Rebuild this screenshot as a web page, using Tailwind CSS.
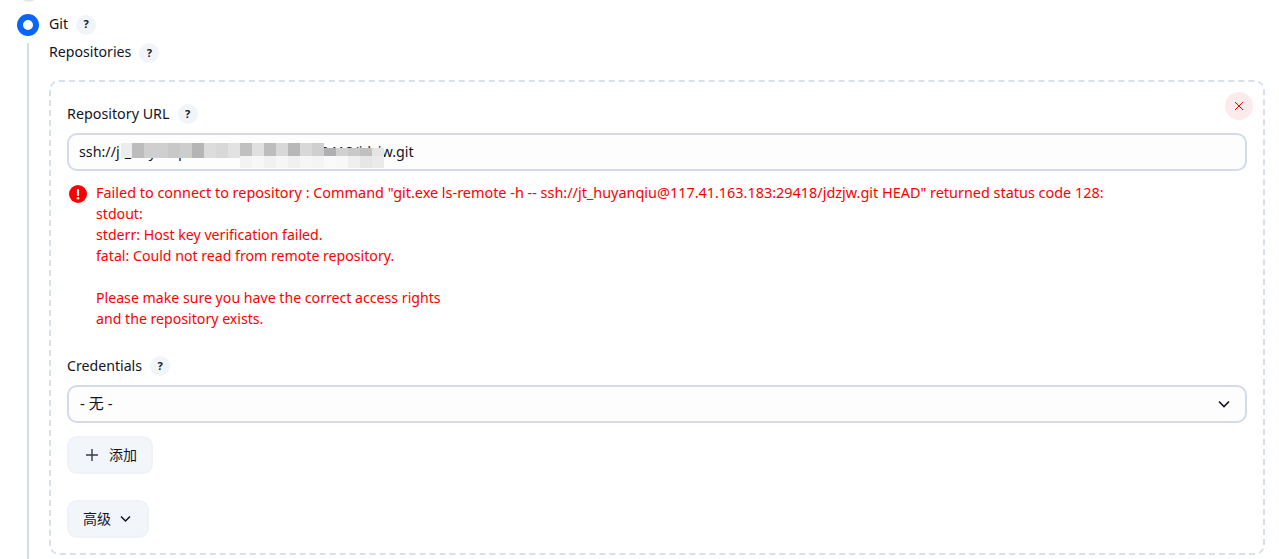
<!DOCTYPE html>
<html lang="zh-CN">
<head>
    <meta charset="UTF-8">
    <title>Git</title>
    <script src="https://cdn.jsdelivr.net/npm/@tailwindcss/browser@4"></script>
</head>
<body class="h-[559px] overflow-hidden bg-white text-[14.15px] text-[#14141f] font-['Noto_Sans','Noto_Sans_CJK_SC',sans-serif]">
    <div class="relative h-[559px] overflow-hidden pl-[17px] pt-[14px]">
        <!-- bottom edge of the previous radio -->
        <span class="absolute left-[18px] -top-[19px] h-[21px] w-[21px] rounded-full bg-[#e4e8ee]"></span>
        <!-- radio row -->
        <div class="flex h-[22px] items-center">
            <span class="h-[22px] w-[22px] rounded-full border-[6px] border-[#0766f7] bg-white"></span>
            <span class="ml-[10px] pb-[3px]">Git</span>
            <span class="ml-[8px] flex h-[20px] w-[20px] items-center justify-center rounded-full bg-[#f1f4f8] pb-px text-[11px] font-bold">?</span>
        </div>
        <div class="mt-[7px] flex h-[516px]">
            <div class="ml-[10px] w-[2px] shrink-0 bg-[#d3dfec]"></div>
            <div class="ml-[20px] w-[1216px]">
                <div class="flex h-[20px] items-center">
                    <span class="pb-[2px]">Repositories</span>
                    <span class="ml-[8px] flex h-[20px] w-[20px] items-center justify-center rounded-full bg-[#f1f4f8] text-[11px] font-bold">?</span>
                </div>
                <!-- repeatable chunk -->
                <div class="relative mt-[17px] h-[475px] rounded-[10px] border-2 border-dashed border-[#d8e0ea] px-[16px] pt-[22px]">
                    <button class="absolute right-[10px] top-[10px] flex h-[28px] w-[28px] items-center justify-center rounded-full bg-[#fdeaea]">
                        <svg class="h-[10px] w-[10px]" viewBox="0 0 10 10" fill="none" stroke="#f00000" stroke-width="1"><path d="M1 1l8 8M9 1l-8 8"/></svg>
                    </button>
                    <div class="flex h-[20px] items-center">
                        <span class="text-[14.3px]">Repository URL</span>
                        <span class="ml-[8px] flex h-[20px] w-[20px] items-center justify-center rounded-full bg-[#f1f4f8] text-[11px] font-bold">?</span>
                    </div>
                    <div class="relative mt-[9px] flex h-[38px] w-[1180px] items-center rounded-[10px] border-2 border-[#d3dbe8] bg-[#fdfdfe] px-[10px]">
                        <span class="text-[14.3px]">ssh://jt_huyanqiu@117.41.163.183:29418/jdzjw.git</span>
                        <!-- mosaic over the address, left part -->
                        <div class="absolute left-[50px] top-[8px] flex h-[15px]">
                            <span class="w-[2px] bg-[#fdfdfe]"></span>
                            <span class="w-[11px] bg-[#ececec]"></span>
                            <span class="w-[12px] bg-[#bcbcbc]"></span>
                            <span class="w-[12px] bg-[#cfcfcf]"></span>
                            <span class="w-[12px] bg-[#cfcfcf]"></span>
                            <span class="w-[12px] bg-[#c8c8c8]"></span>
                            <span class="w-[12px] bg-[#cdcdcd]"></span>
                            <span class="w-[12px] bg-[#b5b5b5]"></span>
                            <span class="w-[12px] bg-[#dcdcdc]"></span>
                            <span class="w-[12px] bg-[#d8d8d8]"></span>
                            <span class="w-[12px] bg-[#e2e2e2]"></span>
                        </div>
                        <!-- mosaic, right part -->
                        <div class="absolute left-[171px] top-[8px] flex flex-col">
                            <div class="flex h-[13px]">
                                <span class="w-[12px] bg-[#c0c0c0]"></span>
                                <span class="w-[12px] bg-[#e0e0e0]"></span>
                                <span class="w-[12px] bg-[#bdbdbd]"></span>
                                <span class="w-[12px] bg-[#d8d8d8]"></span>
                                <span class="w-[12px] bg-[#b8b8b8]"></span>
                                <span class="w-[12px] bg-[#d8d8d8]"></span>
                                <span class="w-[12px] bg-[#cfcfcf]"></span>
                                <span class="mt-[5px] w-[12px] bg-[#b0b0b0]"></span>
                                <span class="mt-[5px] w-[12px] bg-[#d0d0d0]"></span>
                                <span class="mt-[5px] w-[12px] bg-[#c8c8c8]"></span>
                                <span class="mt-[5px] w-[12px] bg-[#c0c0c0]"></span>
                                <span class="mt-[5px] w-[12px] bg-[#e4e4e4]"></span>
                            </div>
                            <div class="flex h-[12px]">
                                <span class="w-[12px] bg-[#f3f3f3]"></span>
                                <span class="w-[12px] bg-[#f7f7f7]"></span>
                                <span class="w-[12px] bg-[#f1f1f1]"></span>
                                <span class="w-[12px] bg-[#f6f6f6]"></span>
                                <span class="w-[12px] bg-[#f0f0f0]"></span>
                                <span class="w-[12px] bg-[#f6f6f6]"></span>
                                <span class="w-[12px] bg-[#f4f4f4]"></span>
                                <span class="w-[12px] bg-[#fafafa]"></span>
                                <span class="w-[12px] bg-[#f8f8f8]"></span>
                                <span class="w-[12px] bg-[#efefef]"></span>
                                <span class="w-[12px] bg-[#e6e6e6]"></span>
                                <span class="w-[12px] bg-[#eaeaea]"></span>
                            </div>
                        </div>
                    </div>
                    <!-- validation error -->
                    <div class="mt-[11px] flex text-[#fe0000]">
                        <svg class="ml-[2px] mt-[3px] h-[18px] w-[18px] shrink-0" viewBox="0 0 18 18"><circle cx="9" cy="9" r="9" fill="#fe0000"/><rect x="7.9" y="4" width="2.2" height="7" rx="1" fill="#fff"/><circle cx="9" cy="13.2" r="1.3" fill="#fff"/></svg>
                        <div class="ml-[9px] leading-[21px]">
                            <div class="text-[14.43px]">Failed to connect to repository : Command "git.exe ls-remote -h -- ssh://jt_huyanqiu@117.41.163.183:29418/jdzjw.git HEAD" returned status code 128:</div>
                            <div>stdout:</div>
                            <div>stderr: Host key verification failed.</div>
                            <div>fatal: Could not read from remote repository.</div>
                            <div class="h-[21px]"></div>
                            <div>Please make sure you have the correct access rights</div>
                            <div>and the repository exists.</div>
                        </div>
                    </div>
                    <div class="mt-[27px] flex h-[20px] items-center">
                        <span>Credentials</span>
                        <span class="ml-[8px] flex h-[20px] w-[20px] items-center justify-center rounded-full bg-[#f1f4f8] text-[11px] font-bold">?</span>
                    </div>
                    <div class="mt-[9px] flex h-[38px] w-[1180px] items-center justify-between rounded-[10px] border-2 border-[#d3dbe8] bg-[#fdfdfe] pl-[11px] pr-[15px]">
                        <span class="pb-[2px] text-[15px]">- 无 -</span>
                        <svg class="h-[10px] w-[12px]" viewBox="0 0 12 10" fill="none" stroke="#14141f" stroke-width="1.6"><path d="M1 2.5l5 5 5-5"/></svg>
                    </div>
                    <button class="mt-[13px] flex h-[38px] items-center rounded-[10px] border-2 border-[#eff2f6] bg-[#f2f5f9] pl-[17px] pr-[14px]">
                        <svg class="h-[12px] w-[12px]" viewBox="0 0 12 12" fill="none" stroke="#3a3a44" stroke-width="1.4"><path d="M6 0v12M0 6h12"/></svg>
                        <span class="ml-[11px] pb-[2px] text-[14px]">添加</span>
                    </button>
                    <button class="mt-[26px] flex h-[38px] items-center rounded-[10px] border-2 border-[#eff2f6] bg-[#f2f5f9] pl-[14px] pr-[16px]">
                        <span class="pb-[2px] text-[14px]">高级</span>
                        <svg class="ml-[9px] h-[8px] w-[11px]" viewBox="0 0 11 8" fill="none" stroke="#14141f" stroke-width="1.5"><path d="M1 1.5l4.5 4.5 4.5-4.5"/></svg>
                    </button>
                </div>
            </div>
        </div>
    </div>
</body>
</html>
